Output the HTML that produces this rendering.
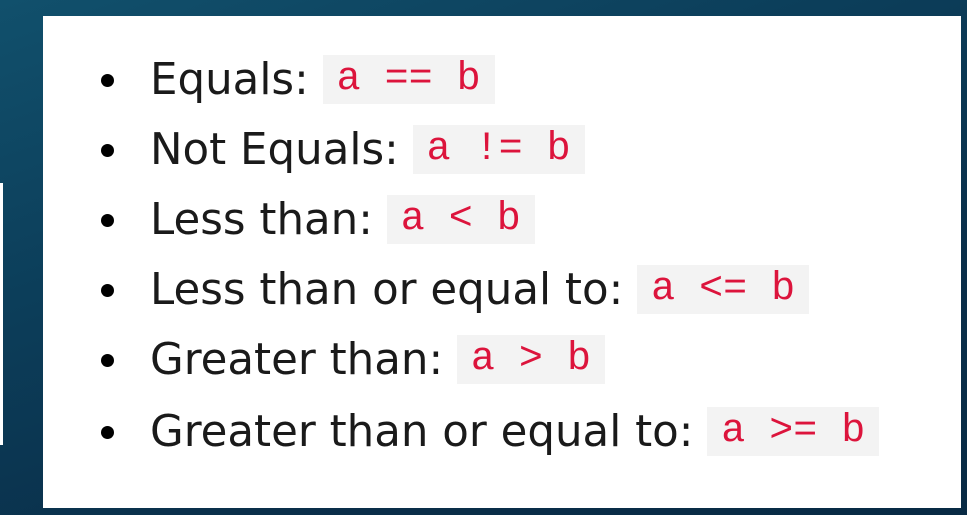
<!DOCTYPE html>
<html><head><style>
html,body{margin:0;padding:0;width:967px;height:515px;overflow:hidden;}
body{background:linear-gradient(160deg,#11506c 0%,#0c3e5a 35%,#0a2f4a 70%,#082a44 100%);position:relative;font-family:"DejaVu Sans","Liberation Sans",sans-serif;}
.sliver{position:absolute;left:0;top:183px;width:3px;height:262px;background:#fff;}
.panel{position:absolute;left:43px;top:16px;width:918px;height:492px;background:#fff;}
.row{position:absolute;left:101px;height:50px;display:flex;align-items:center;font-size:43.5px;color:#1a1a1a;white-space:pre;}
.dot{position:absolute;left:0;top:19px;width:13px;height:13px;border-radius:50%;background:#000;}
.t{position:absolute;left:49px;top:0;line-height:50px;}
code{font-family:"Liberation Mono","DejaVu Sans Mono",monospace;font-size:40px;color:#dc143c;background:#f3f3f3;padding:0 14px;display:inline-block;height:49px;line-height:49px;vertical-align:top;}
</style></head><body>
<div class="sliver"></div>
<div class="panel"></div>
<div class="row" style="top:55px"><span class="dot"></span><span class="t">Equals: <code>a == b</code></span></div>
<div class="row" style="top:125px"><span class="dot"></span><span class="t">Not Equals: <code>a != b</code></span></div>
<div class="row" style="top:195px"><span class="dot"></span><span class="t">Less than: <code>a &lt; b</code></span></div>
<div class="row" style="top:265px"><span class="dot"></span><span class="t">Less than or equal to: <code>a &lt;= b</code></span></div>
<div class="row" style="top:335px"><span class="dot"></span><span class="t">Greater than: <code>a &gt; b</code></span></div>
<div class="row" style="top:407px"><span class="dot"></span><span class="t">Greater than or equal to: <code>a &gt;= b</code></span></div>
</body></html>
